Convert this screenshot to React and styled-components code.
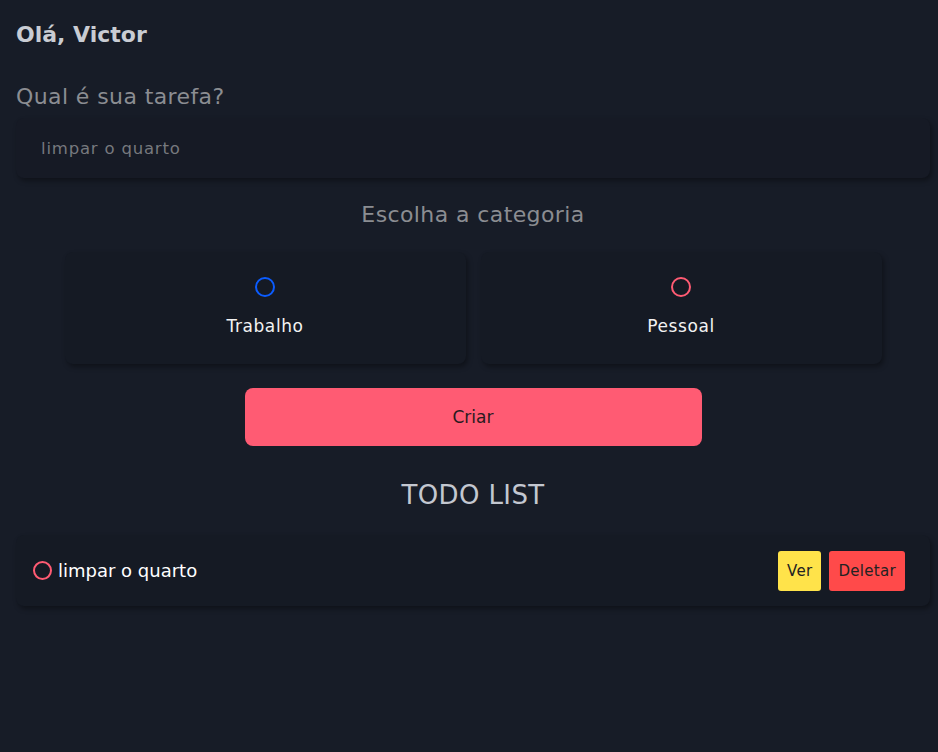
import React from "react";
import styled, { createGlobalStyle } from "styled-components";

const GlobalStyle = createGlobalStyle`
  * { box-sizing: border-box; }
  body {
    margin: 0;
    background: #171c27;
    font-family: "DejaVu Sans", "Noto Sans", sans-serif;
  }
`;

const Main = styled.main`
  padding: 21px 8px 40px 16px;
  display: flex;
  flex-direction: column;
`;

const Greeting = styled.h1`
  margin: 0;
  font-size: 22px;
  line-height: 28px;
  font-weight: 700;
  color: #c9ccd3;
`;

const Question = styled.h2`
  margin: 34px 0 0;
  font-size: 22px;
  line-height: 28px;
  font-weight: 400;
  letter-spacing: 0.4px;
  color: #8b8d92;
`;

const TaskInput = styled.input`
  margin-top: 7px;
  height: 60px;
  width: 100%;
  padding: 0 25px;
  border: none;
  outline: none;
  border-radius: 8px;
  background: #161a25;
  box-shadow: 2px 3px 5px rgba(0, 0, 0, 0.35);
  font-family: inherit;
  font-size: 16.5px;
  letter-spacing: 0.8px;
  color: #d0d0d0;

  &::placeholder {
    color: #77797e;
  }
`;

const SectionTitle = styled.h3`
  margin: ${(p) => p.$top}px 0 0;
  text-align: center;
  font-weight: 400;
  font-size: ${(p) => p.$size}px;
  line-height: ${(p) => p.$size + 6}px;
  letter-spacing: 0.4px;
  color: ${(p) => p.$color};
`;

const Categories = styled.div`
  margin: 23px auto 0;
  width: 817px;
  display: grid;
  grid-template-columns: 1fr 1fr;
  gap: 15px;
`;

const CategoryCard = styled.label`
  height: 112px;
  padding-top: 25px;
  border-radius: 8px;
  background: #151a24;
  box-shadow: 2px 3px 5px rgba(0, 0, 0, 0.35);
  display: flex;
  flex-direction: column;
  align-items: center;
  gap: 18px;
  cursor: pointer;
`;

const Bubble = styled.span`
  width: ${(p) => p.$size}px;
  height: ${(p) => p.$size}px;
  border-radius: 50%;
  border: 2px solid ${(p) => p.$color};
  flex-shrink: 0;
`;

const CategoryLabel = styled.span`
  font-size: 17px;
  line-height: 22px;
  letter-spacing: 0.6px;
  color: #f2f2f2;
`;

const CreateButton = styled.button`
  margin: 24px auto 0;
  width: 457px;
  height: 58px;
  border: none;
  border-radius: 8px;
  background: #ff5b73;
  font-family: inherit;
  font-size: 17px;
  color: #2a1a20;
  cursor: pointer;
`;

const TodoItem = styled.div`
  margin-top: 24px;
  height: 71px;
  padding: 0 25px 0 17px;
  border-radius: 8px;
  background: #151a24;
  box-shadow: 2px 3px 5px rgba(0, 0, 0, 0.35);
  display: flex;
  align-items: center;
  justify-content: space-between;
`;

const TodoLeft = styled.div`
  display: flex;
  align-items: center;
  gap: 6px;
`;

const TodoText = styled.span`
  font-size: 18px;
  color: #ffffff;
`;

const Actions = styled.div`
  display: flex;
  gap: 8px;
`;

const ActionButton = styled.button`
  height: 40px;
  padding: 0 9px;
  border: none;
  border-radius: 3px;
  background: ${(p) => p.$bg};
  font-family: inherit;
  font-size: 15px;
  letter-spacing: 0.3px;
  color: #222;
  cursor: pointer;
`;

const App = () => {
  return (
    <>
      <GlobalStyle />
      <Main>
        <Greeting>Olá, Victor</Greeting>
        <Question>Qual é sua tarefa?</Question>
        <TaskInput placeholder="limpar o quarto" />

        <SectionTitle $top={23} $size={22} $color="#8b8d92">
          Escolha a categoria
        </SectionTitle>
        <Categories>
          <CategoryCard>
            <Bubble $size={20} $color="#0b5cff" />
            <CategoryLabel>Trabalho</CategoryLabel>
          </CategoryCard>
          <CategoryCard>
            <Bubble $size={20} $color="#ff5b73" />
            <CategoryLabel>Pessoal</CategoryLabel>
          </CategoryCard>
        </Categories>

        <CreateButton>Criar</CreateButton>

        <SectionTitle $top={33} $size={26} $color="#c3c7d0">
          TODO LIST
        </SectionTitle>

        <TodoItem>
          <TodoLeft>
            <Bubble $size={19} $color="#ff5b73" />
            <TodoText>limpar o quarto</TodoText>
          </TodoLeft>
          <Actions>
            <ActionButton $bg="#ffe34a">Ver</ActionButton>
            <ActionButton $bg="#ff4a4a">Deletar</ActionButton>
          </Actions>
        </TodoItem>
      </Main>
    </>
  );
};

export default App;
